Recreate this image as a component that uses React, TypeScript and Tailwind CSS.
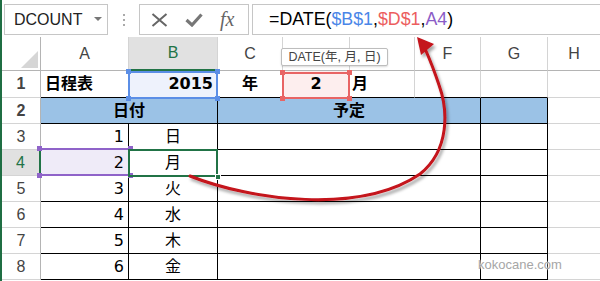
import React from "react";

const ui = "font-['Liberation_Sans','Noto_Sans_CJK_JP',Arial,sans-serif]";
const cellFont = "font-['DejaVu_Sans','Noto_Sans_CJK_JP',sans-serif] text-[16px] text-black";

// little squares on the corners of a range outline
function Corners({ color }: { color: string }) {
  return (
    <>
      <span className={`absolute -left-[4px] -top-[4px] w-[5px] h-[5px] ${color}`} />
      <span className={`absolute -right-[4px] -top-[4px] w-[5px] h-[5px] ${color}`} />
      <span className={`absolute -left-[4px] -bottom-[4px] w-[5px] h-[5px] ${color}`} />
      <span className={`absolute -right-[4px] -bottom-[4px] w-[5px] h-[5px] ${color}`} />
    </>
  );
}

function RowHead({ n, active = false }: { n: number; active?: boolean }) {
  return (
    <div
      className={
        active
          ? `w-[39px] shrink-0 flex items-center justify-center bg-[#e1e1e1] text-[#217346] border-r-2 border-r-[#217346] border-b border-b-[#d4d4d4] ${ui} text-[16px]`
          : `w-[39px] shrink-0 flex items-center justify-center text-[#444] border-r border-r-[#b4b4b4] border-b border-b-[#d4d4d4] ${ui} text-[16px]`
      }
    >
      {n}
    </div>
  );
}

const days = ["日", "月", "火", "水", "木", "金"];

export default function App() {
  return (
    <div className="relative w-[600px] h-[281px] overflow-hidden bg-white border-l-2 border-[#1f6e43]">
      {/* Formula bar */}
      <div className={`flex h-[37px] pt-[4px] items-start ${ui}`}>
        <div className="ml-[2px] w-[104px] h-[31px] border border-[#c6c6c6] flex items-center pl-[9px] pr-[5px] text-[16px] text-[#222]">
          <span className="flex-1">DCOUNT</span>
          <svg width="8" height="5" viewBox="0 0 8 5">
            <polygon points="0,0 8,0 4,4" fill="#777" />
          </svg>
        </div>
        <div className="w-[31px] h-[31px] flex flex-col items-center justify-center gap-[3px]">
          <span className="w-[2px] h-[2px] bg-[#aaa]" />
          <span className="w-[2px] h-[2px] bg-[#aaa]" />
          <span className="w-[2px] h-[2px] bg-[#aaa]" />
        </div>
        <div className="w-[110px] h-[31px] border border-[#c6c6c6] flex items-center pl-[11px] gap-[17px]">
          <svg width="17" height="14" viewBox="0 0 17 14">
            <path d="M1.5 1 L15.5 13 M15.5 1 L1.5 13" stroke="#666" strokeWidth="2" fill="none" />
          </svg>
          <svg width="18" height="14" viewBox="0 0 18 14">
            <path d="M1.5 7 L7 12 L16.5 1.5" stroke="#777" strokeWidth="3.2" fill="none" strokeLinejoin="miter" />
          </svg>
          <span className="font-['Liberation_Serif',serif] italic text-[20px] text-[#666] -mt-[2px]">fx</span>
        </div>
        <div className="ml-[3px] flex-1 h-[31px] border-y border-l border-[#c6c6c6] flex items-center pl-[16px] text-[17.8px] text-black whitespace-nowrap">
          =DATE(<span className="text-[#4a86e8]">$B$1</span>,<span className="text-[#ec5e5e]">$D$1</span>,
          <span className="text-[#8b5cc7]">A4</span>)
        </div>
      </div>

      {/* Column headers (D and E sit under the tooltip) */}
      <div className={`flex h-[34px] ${ui} text-[16px] text-[#444]`}>
        <div className="w-[39px] shrink-0 flex items-end justify-end pr-[2px] pb-[2px] border-r border-r-[#b4b4b4] border-b border-b-[#b4b4b4]">
          <svg width="17" height="17" viewBox="0 0 17 17">
            <polygon points="17,0 17,17 0,17" fill="#d6d6d6" />
          </svg>
        </div>
        <div className="w-[88px] shrink-0 flex items-center justify-center border-r border-r-[#d4d4d4] border-b border-b-[#b4b4b4]">A</div>
        <div className="w-[89px] shrink-0 flex items-center justify-center bg-[#e1e1e1] text-[#217346] border-r border-r-[#d4d4d4] border-b-2 border-b-[#217346]">B</div>
        <div className="w-[65px] shrink-0 flex items-center justify-center border-r border-r-[#d4d4d4] border-b border-b-[#b4b4b4]">C</div>
        <div className="w-[67px] shrink-0 border-r border-r-[#d4d4d4] border-b border-b-[#b4b4b4]" />
        <div className="w-[65px] shrink-0 border-r border-r-[#d4d4d4] border-b border-b-[#b4b4b4]" />
        <div className="w-[66px] shrink-0 flex items-center justify-center border-r border-r-[#d4d4d4] border-b border-b-[#b4b4b4]">F</div>
        <div className="w-[67px] shrink-0 flex items-center justify-center border-r border-r-[#d4d4d4] border-b border-b-[#b4b4b4]">G</div>
        <div className="flex-1 flex items-center justify-center border-b border-b-[#b4b4b4]">H</div>
      </div>

      {/* Row 1 */}
      <div className={`flex h-[27px] ${cellFont} font-bold`}>
        <RowHead n={1} />
        <div className="w-[88px] shrink-0 flex items-center pl-[4px] border-r border-r-[#d4d4d4] border-b border-b-black">日程表</div>
        <div className="relative w-[89px] shrink-0 flex items-center justify-end pr-[4px] bg-[#eef2fc] border-r border-r-[#d4d4d4] border-b border-b-black">
          2015
          <div className="absolute z-10 -left-px top-0 w-[90px] h-[28px] border-2 border-[#5b8ee6]">
            <Corners color="bg-[#5b8ee6]" />
          </div>
        </div>
        <div className="w-[65px] shrink-0 flex items-center justify-center border-r border-r-[#d4d4d4] border-b border-b-black">年</div>
        <div className="relative w-[67px] shrink-0 flex items-center justify-center bg-[#fdeeee] border-r border-r-[#d4d4d4] border-b border-b-black">
          2
          <div className="absolute z-10 -left-px top-px w-[68px] h-[27px] border-2 border-[#e86464]">
            <Corners color="bg-[#e86464]" />
          </div>
        </div>
        <div className="w-[65px] shrink-0 flex items-center pl-[2px] border-r border-r-[#d4d4d4] border-b border-b-black">月</div>
        <div className="w-[66px] shrink-0 border-r border-r-[#d4d4d4] border-b border-b-black" />
        <div className="w-[67px] shrink-0 border-r border-r-[#d4d4d4] border-b border-b-black" />
        <div className="flex-1 border-b border-b-[#d4d4d4]" />
      </div>

      {/* Row 2 */}
      <div className={`flex h-[26px] ${cellFont} font-bold`}>
        <RowHead n={2} />
        <div className="w-[177px] shrink-0 flex items-center justify-center bg-[#9bc2e6] border-r border-r-black border-b border-b-black">日付</div>
        <div className="w-[263px] shrink-0 flex items-center justify-center bg-[#9bc2e6] border-r border-r-black border-b border-b-black">予定</div>
        <div className="w-[67px] shrink-0 bg-[#9bc2e6] border-r border-r-black border-b border-b-black" />
        <div className="flex-1 border-b border-b-[#d4d4d4]" />
      </div>

      {/* Rows 3-8 */}
      {days.map((d, i) => (
        <div key={d} className={`flex h-[26px] ${cellFont}`}>
          <RowHead n={i + 3} active={i === 1} />
          <div
            className={
              i === 1
                ? "relative w-[88px] shrink-0 flex items-center justify-end pr-[4px] bg-[#efebf8] border-r border-r-black border-b border-b-black"
                : "w-[88px] shrink-0 flex items-center justify-end pr-[4px] border-r border-r-black border-b border-b-black"
            }
          >
            {i + 1}
            {i === 1 && (
              <div className="absolute z-10 left-0 -top-[2px] w-[88px] h-[28px] border-y-2 border-[#8f63c9]">
                <Corners color="bg-[#8f63c9]" />
              </div>
            )}
          </div>
          <div
            className={
              i === 1
                ? "relative w-[89px] shrink-0 flex items-center justify-center border-r border-r-black border-b border-b-black"
                : "w-[89px] shrink-0 flex items-center justify-center border-r border-r-black border-b border-b-black"
            }
          >
            {d}
            {i === 1 && (
              <div className="absolute z-20 -left-px -top-px w-[90px] h-[28px] border-2 border-[#217346]">
                <span className="absolute -right-[5px] -bottom-[5px] w-[6px] h-[6px] bg-[#217346] border border-white" />
              </div>
            )}
          </div>
          <div className="w-[263px] shrink-0 border-r border-r-black border-b border-b-black" />
          <div className="w-[67px] shrink-0 border-r border-r-black border-b border-b-black" />
          <div className="flex-1 border-b border-b-[#d4d4d4]" />
        </div>
      ))}

      {/* function tooltip */}
      <div
        className={`absolute z-30 left-[279px] top-[48px] w-[107px] h-[18px] flex items-center justify-center bg-white border border-[#bdbdbd] rounded-[2px] shadow-[0_1px_2px_rgba(0,0,0,0.15)] text-[12.5px] text-[#444] ${ui}`}
      >
        DATE(年, 月, 日)
      </div>

      {/* arrow */}
      <svg className="absolute z-40 left-[-2px] top-0 pointer-events-none" width="600" height="281" viewBox="0 0 600 281">
        <defs>
          <filter id="sh" x="-10%" y="-10%" width="130%" height="130%">
            <feDropShadow dx="2" dy="3" stdDeviation="1.6" floodColor="#000" floodOpacity="0.35" />
          </filter>
        </defs>
        <g filter="url(#sh)">
          <path
            d="M190,176 C250,200 360,215 420,174 C450,150 448,110 439,85 C434,70 430,60 426,51"
            stroke="#c4121a"
            strokeWidth="3"
            fill="none"
            strokeLinecap="round"
          />
          <polygon points="417,37 434,44 421,55" fill="#c4121a" />
        </g>
      </svg>

      {/* watermark */}
      <div className={`absolute z-30 left-[476px] top-[255px] text-[13px] text-[#a6a6a6] [text-shadow:0_0_2px_#fff,0_0_2px_#fff] ${ui}`}>
        kokocane.com
      </div>
    </div>
  );
}
